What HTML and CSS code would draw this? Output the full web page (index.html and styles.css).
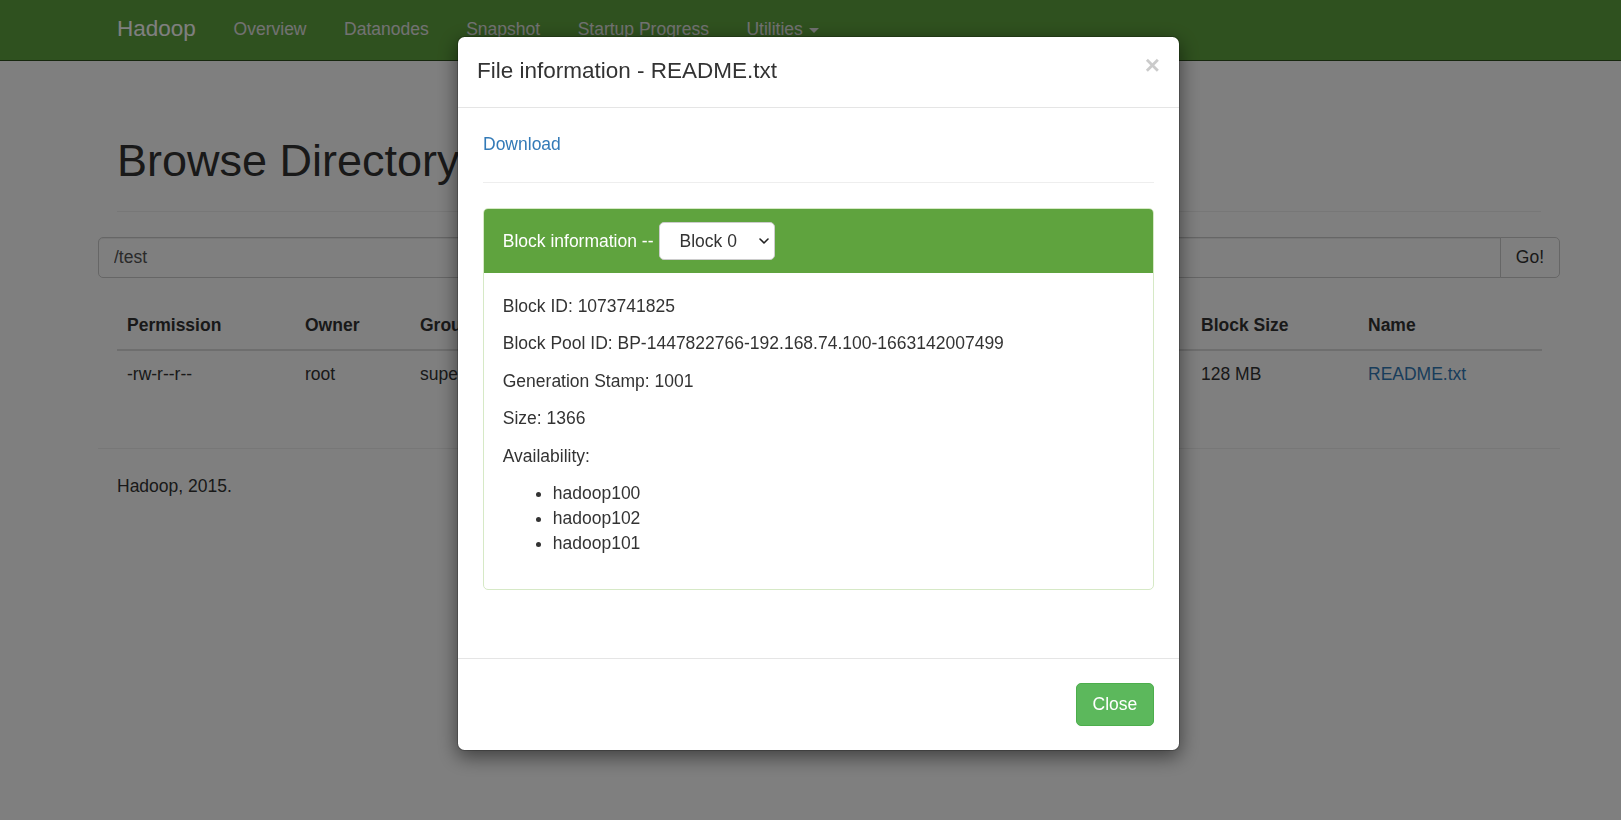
FILE: index.html
```html
<!DOCTYPE html>
<html lang="en">
<head>
<meta charset="utf-8">
<title>Browsing HDFS</title>
<link rel="stylesheet" href="styles.css">
</head>
<body>
<header class="navbar">
  <div class="container nav-inner">
    <a class="brand" href="#">Hadoop</a>
    <ul class="nav">
      <li><a href="#">Overview</a></li>
      <li><a href="#">Datanodes</a></li>
      <li><a href="#">Snapshot</a></li>
      <li><a href="#">Startup Progress</a></li>
      <li><a href="#">Utilities <span class="caret"></span></a></li>
    </ul>
  </div>
</header>

<main class="container">
  <div class="page-header"><h1>Browse Directory</h1></div>

  <form class="row dir-form">
    <div class="input-group">
      <input type="text" class="form-control" value="/test">
      <button type="button" class="btn-go">Go!</button>
    </div>
  </form>

  <table class="table">
    <colgroup>
      <col class="c-perm"><col class="c-owner"><col class="c-mid"><col class="c-mid"><col class="c-mid"><col class="c-mid"><col class="c-bsize"><col class="c-name">
    </colgroup>
    <thead>
      <tr><th>Permission</th><th>Owner</th><th>Group</th><th>Size</th><th>Last Modified</th><th>Replication</th><th>Block Size</th><th>Name</th></tr>
    </thead>
    <tbody>
      <tr><td>-rw-r--r--</td><td>root</td><td>supergroup</td><td>1.33 KB</td><td>Sep 14 16:55</td><td>3</td><td>128 MB</td><td><a href="#">README.txt</a></td></tr>
    </tbody>
  </table>

  <div class="row footer">
    <hr class="footer-rule">
    <p class="footer-text">Hadoop, 2015.</p>
  </div>
</main>

<div class="backdrop"></div>

<div class="modal">
  <div class="modal-dialog">
    <div class="modal-header">
      <h4 class="modal-title">File information - README.txt</h4>
      <button type="button" class="close">&times;</button>
    </div>
    <div class="modal-body">
      <a href="#" class="download">Download</a>
      <hr class="body-rule">
      <div class="panel">
        <div class="panel-heading">
          <span>Block information --</span>
          <span class="select-wrap">
            <select class="block-select"><option>Block 0</option></select>
            <svg class="chev" viewBox="0 0 10 6" width="10" height="6"><path d="M1 1l4 4 4-4" fill="none" stroke="#222" stroke-width="1.6" stroke-linecap="round" stroke-linejoin="round"/></svg>
          </span>
        </div>
        <div class="panel-body">
          <p>Block ID: 1073741825</p>
          <p>Block Pool ID: BP-1447822766-192.168.74.100-1663142007499</p>
          <p>Generation Stamp: 1001</p>
          <p>Size: 1366</p>
          <p>Availability:</p>
          <ul>
            <li>hadoop100</li>
            <li>hadoop102</li>
            <li>hadoop101</li>
          </ul>
        </div>
      </div>
    </div>
    <div class="modal-footer">
      <button type="button" class="btn-close">Close</button>
    </div>
  </div>
</div>
</body>
</html>
```
FILE: styles.css
```css
* { box-sizing: border-box; }
html, body { margin: 0; padding: 0; }
body {
  font-family: "Liberation Sans", Arial, Helvetica, sans-serif;
  font-size: 17.5px;
  line-height: 25px;
  color: #333;
  background: #fff;
  width: 1621px;
  height: 820px;
  overflow: hidden;
}
a { color: #337ab7; text-decoration: none; }

.container { width: 1462px; margin-left: 98px; padding: 0 19px; }
.row { margin-left: -19px; margin-right: -19px; }

/* navbar */
.navbar { height: 61px; background: #5fa33e; border-bottom: 1px solid #2d4f1d; }
.nav-inner { display: flex; align-items: flex-start; }
.brand {
  margin-left: -19px;
  padding: 15.5px 19px 0;
  font-size: 22.5px;
  line-height: 25px;
  color: #fff;
}
.nav { list-style: none; margin: 0; padding: 0; display: flex; }
.nav a { display: block; padding: 17px 18.75px 0; color: #e4e4e4; line-height: 25px; }
.caret {
  display: inline-block;
  width: 0; height: 0;
  margin-left: 1px;
  vertical-align: middle;
  border-top: 5px solid;
  border-left: 5px solid transparent;
  border-right: 5px solid transparent;
}

/* page */
.page-header { padding: 75px 0 12.5px; margin-bottom: 25px; border-bottom: 1px solid #eee; }
.page-header h1 { margin: 0 0 12.5px; font-size: 45px; line-height: 49.5px; font-weight: normal; color: #333; }

.dir-form { margin-bottom: 25px; }
.input-group { display: flex; height: 41px; }
.form-control {
  flex: 1;
  height: 41px;
  border: 1px solid #ccc;
  border-radius: 5px 0 0 5px;
  padding: 0 15px;
  font: inherit;
  color: #555;
  background: #fff;
  box-shadow: inset 0 1px 1px rgba(0,0,0,.075);
}
.btn-go {
  height: 41px;
  margin-left: -1px;
  border: 1px solid #ccc;
  border-radius: 0 5px 5px 0;
  padding: 0 15px;
  background: #fff;
  font: inherit;
  color: #333;
}

.table { width: 1425px; table-layout: fixed; border-collapse: collapse; margin-bottom: 25px; }
.c-perm { width: 178px; }
.c-owner { width: 115px; }
.c-mid { width: 195.25px; }
.c-bsize { width: 167px; }
.c-name { width: 184px; }
.table th, .table td { padding: 10px; text-align: left; line-height: 25px; white-space: nowrap; overflow: hidden; }
.table th { border-bottom: 2px solid #ddd; font-weight: bold; padding-bottom: 11px; }
.table td { border-top: 1px solid #ddd; padding-top: 11px; }

.footer { display: flow-root; }
.footer-rule { margin: 26px 0 25px; border: 0; border-top: 1px solid #eee; height: 0; }
.footer-text { margin: 0; padding: 0 19px; }

/* modal */
.backdrop { position: fixed; inset: 0; background: rgba(0,0,0,.5); }
.modal { position: fixed; inset: 0; }
.modal-dialog {
  width: 723px;
  margin: 36px 0 0 457px;
  background: #fff;
  border: 1px solid rgba(0,0,0,.2);
  border-radius: 7.5px;
  box-shadow: 0 6px 19px rgba(0,0,0,.5);
  background-clip: padding-box;
}
.modal-header {
  display: flex;
  justify-content: space-between;
  align-items: flex-start;
  padding: 18px 19px 19.5px;
  border-bottom: 1px solid #e5e5e5;
}
.modal-title { margin: 0; font-size: 22.5px; line-height: 32px; font-weight: normal; color: #333; }
.close {
  margin-top: -3px;
  padding: 0;
  border: 0;
  background: none;
  font-family: "Liberation Sans", Arial, sans-serif;
  font-size: 26px;
  font-weight: bold;
  line-height: 1;
  color: #000;
  opacity: .2;
  text-shadow: 0 1px 0 #fff;
}
.modal-body { padding: 24.5px 25px 43px; }
.download { display: inline-block; }
.body-rule { margin: 25px 0; border: 0; border-top: 1px solid #eee; height: 0; }

.panel { border: 1px solid #d6e9c6; border-radius: 5px; margin-bottom: 25px; }
.panel-heading {
  display: flex;
  align-items: center;
  padding: 13px 18.75px;
  background: #5fa33e;
  color: #fff;
  border-radius: 4px 4px 0 0;
}
.select-wrap { position: relative; display: inline-block; margin-left: 5px; height: 38px; }
.block-select {
  -webkit-appearance: none;
  appearance: none;
  display: block;
  width: 116px;
  height: 38px;
  padding: 0 0 0 20px;
  border: 1px solid #ccc;
  border-radius: 5px;
  background: #fff;
  font: inherit;
  color: #333;
}
.chev { position: absolute; right: 6px; top: 16px; pointer-events: none; }
.panel-body { padding: 20.5px 18.75px 20px; }
.panel-body p { margin: 0 0 12.5px; }
.panel-body ul { margin: 0 0 12.5px; padding-left: 50px; }

.modal-footer {
  display: flex;
  justify-content: flex-end;
  padding: 24px 25px;
  border-top: 1px solid #e5e5e5;
}
.btn-close {
  height: 43px;
  padding: 0 15.75px;
  border: 1px solid #4cae4c;
  border-radius: 5px;
  background: #5cb85c;
  color: #fff;
  font: inherit;
}
```
